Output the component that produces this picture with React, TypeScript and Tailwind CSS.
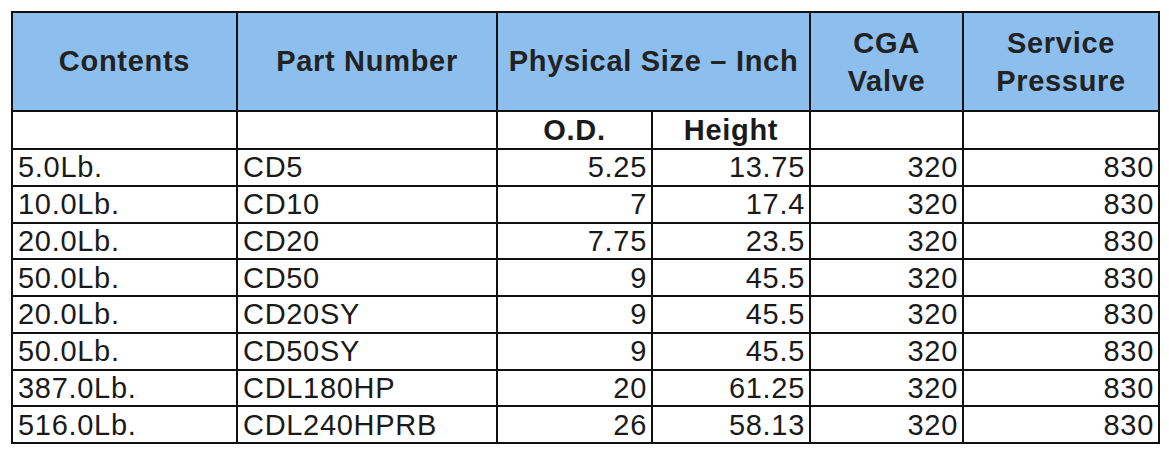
const rows = [
  ["5.0Lb.", "CD5", "5.25", "13.75", "320", "830"],
  ["10.0Lb.", "CD10", "7", "17.4", "320", "830"],
  ["20.0Lb.", "CD20", "7.75", "23.5", "320", "830"],
  ["50.0Lb.", "CD50", "9", "45.5", "320", "830"],
  ["20.0Lb.", "CD20SY", "9", "45.5", "320", "830"],
  ["50.0Lb.", "CD50SY", "9", "45.5", "320", "830"],
  ["387.0Lb.", "CDL180HP", "20", "61.25", "320", "830"],
  ["516.0Lb.", "CDL240HPRB", "26", "58.13", "320", "830"],
];

export default function App() {
  const cell = "border-2 border-[#111] p-0";
  const head = `${cell} bg-[#8cbfee] text-center font-bold text-[#222] align-middle`;
  return (
    <div className="min-h-screen bg-white pl-[11px] pt-[11px] font-['Liberation_Sans',Arial,sans-serif] text-[#1a1a1a]">
      <table className="table-fixed border-collapse w-[1147px] text-[29px] tracking-[0.7px]">
        <colgroup>
          <col className="w-[225px]" />
          <col className="w-[260px]" />
          <col className="w-[155px]" />
          <col className="w-[158px]" />
          <col className="w-[153px]" />
          <col className="w-[196px]" />
        </colgroup>
        <thead>
          <tr className="h-[99px]">
            <th className={head}>Contents</th>
            <th className={head}>Part Number</th>
            <th className={head} colSpan={2}>Physical Size – Inch</th>
            <th className={`${head} leading-[38px]`}>CGA<br />Valve</th>
            <th className={`${head} leading-[38px]`}>Service<br />Pressure</th>
          </tr>
          <tr className="h-[38px]">
            <th className={cell}></th>
            <th className={cell}></th>
            <th className={`${cell} text-center font-bold leading-[30px]`}>O.D.</th>
            <th className={`${cell} text-center font-bold leading-[30px]`}>Height</th>
            <th className={cell}></th>
            <th className={cell}></th>
          </tr>
        </thead>
        <tbody>
          {rows.map((r, i) => (
            <tr key={i} className="h-[36.75px] leading-[32px]">
              <td className={`${cell} pl-[5px] text-left`}>{r[0]}</td>
              <td className={`${cell} pl-[5px] text-left`}>{r[1]}</td>
              <td className={`${cell} pr-[4px] text-right`}>{r[2]}</td>
              <td className={`${cell} pr-[4px] text-right`}>{r[3]}</td>
              <td className={`${cell} pr-[4px] text-right`}>{r[4]}</td>
              <td className={`${cell} pr-[4px] text-right`}>{r[5]}</td>
            </tr>
          ))}
        </tbody>
      </table>
    </div>
  );
}
